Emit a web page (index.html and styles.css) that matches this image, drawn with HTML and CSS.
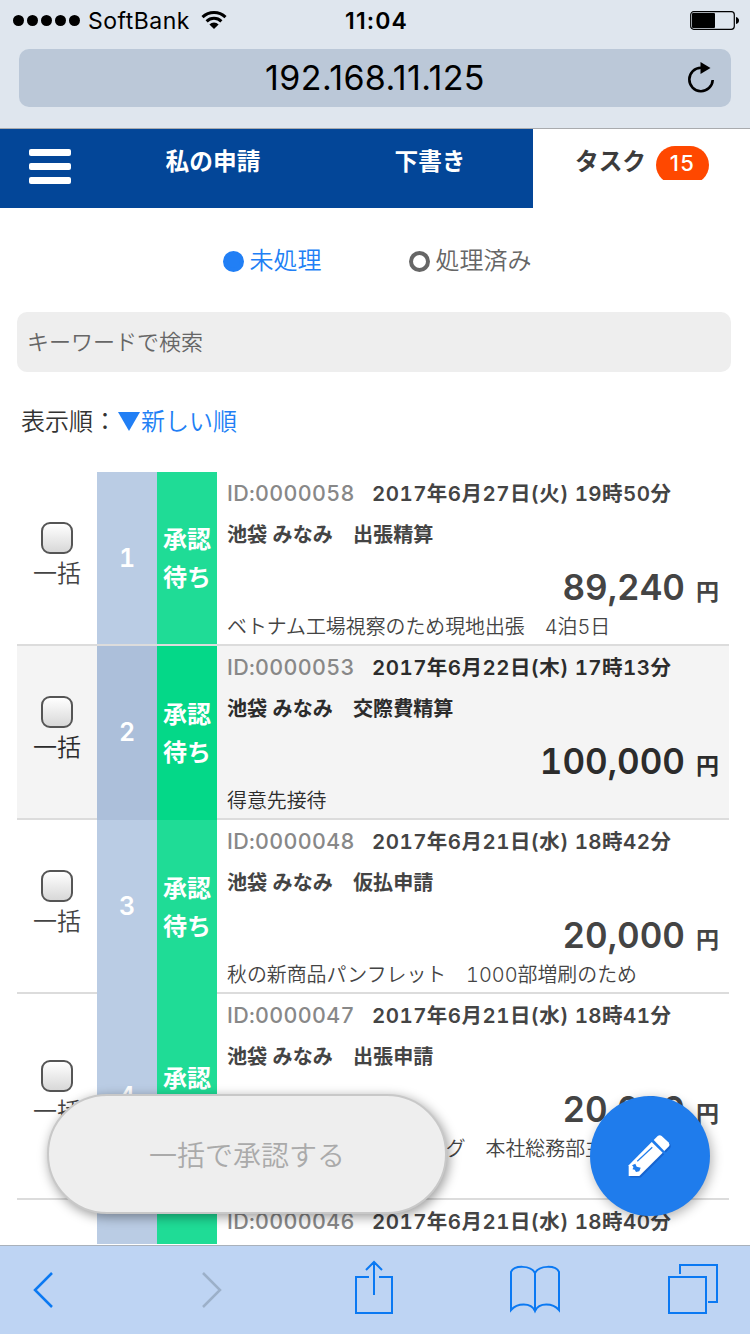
FILE: index.html
```html
<!DOCTYPE html>
<html lang="ja">

<head>
    <meta charset="UTF-8">
    <title>タスク</title>
    <link rel="stylesheet" href="styles.css">
</head>

<body>
    <div class="phone">
        <div class="status-bar">
            <div class="carrier">
                <span class="dots"><i></i><i></i><i></i><i></i><i></i></span>
                <span class="carrier-name">SoftBank</span>
                <svg class="wifi" width="26" height="20" viewBox="0 0 26 20">
                    <path d="M1.5 7.2a16.5 16.5 0 0 1 23 0M5.6 11.3a10.7 10.7 0 0 1 14.8 0" fill="none" stroke="#000" stroke-width="3" />
                    <path d="M13 19l-4.6-4.6a6.6 6.6 0 0 1 9.2 0z" />
                </svg>
            </div>
            <div class="clock">11:04</div>
            <svg class="battery" width="50" height="20" viewBox="0 0 50 20">
                <rect x=".7" y=".7" width="43.6" height="17.6" rx="3" fill="none" stroke="#000" stroke-width="1.2" />
                <rect x="2" y="2" width="23" height="15" rx="1" />
                <path d="M46 6q3 1 3 3.5t-3 3.5z" />
            </svg>
        </div>
        <div class="url-bar">
            <div class="url">192.168.11.125</div>
            <svg class="reload" width="30" height="34" viewBox="0 0 30 34">
                <path d="M15 6.8A11.7 11.7 0 1 0 26.7 19" fill="none" stroke="#000" stroke-width="2.6" />
                <path d="M14.5 1v12l10-6z" />
            </svg>
        </div>

        <div class="nav">
            <div class="menu"><span></span><span></span><span></span></div>
            <div class="tab">私の申請</div>
            <div class="tab">下書き</div>
            <div class="tab active">タスク<div class="badge-wrap"><span class="badge">15</span></div></div>
        </div>

        <div class="main">
            <div class="filter">
                <label class="on"><i class="radio"></i>未処理</label>
                <label><i class="radio"></i>処理済み</label>
            </div>
            <input type="text" class="search" placeholder="キーワードで検索">
            <div class="sort">表示順：<a><svg width="22" height="20" viewBox="0 0 22 20"><path d="M0 0h22L11 19z" fill="#217ff5" /></svg>新しい順</a></div>

            <div class="list">
                <div class="row">
                    <div class="check"><input type="checkbox">一括</div>
                    <div class="no">1</div>
                    <div class="state">承認<br>待ち</div>
                    <div class="detail">
                        <div class="head"><span class="id">ID:0000058</span><span class="date">2017年6月27日(火) 19時50分</span></div>
                        <div class="name">池袋 みなみ　出張精算</div>
                        <div class="money"><b>89,240</b>円</div>
                        <div class="memo">ベトナム工場視察のため現地出張　4泊5日</div>
                    </div>
                </div>
                <div class="row even">
                    <div class="check"><input type="checkbox">一括</div>
                    <div class="no">2</div>
                    <div class="state">承認<br>待ち</div>
                    <div class="detail">
                        <div class="head"><span class="id">ID:0000053</span><span class="date">2017年6月22日(木) 17時13分</span></div>
                        <div class="name">池袋 みなみ　交際費精算</div>
                        <div class="money"><b>100,000</b>円</div>
                        <div class="memo">得意先接待</div>
                    </div>
                </div>
                <div class="row">
                    <div class="check"><input type="checkbox">一括</div>
                    <div class="no">3</div>
                    <div class="state">承認<br>待ち</div>
                    <div class="detail">
                        <div class="head"><span class="id">ID:0000048</span><span class="date">2017年6月21日(水) 18時42分</span></div>
                        <div class="name">池袋 みなみ　仮払申請</div>
                        <div class="money"><b>20,000</b>円</div>
                        <div class="memo">秋の新商品パンフレット　1000部増刷のため</div>
                    </div>
                </div>
                <div class="row tall">
                    <div class="check"><input type="checkbox">一括</div>
                    <div class="no">4</div>
                    <div class="state">承認<br>待ち</div>
                    <div class="detail">
                        <div class="head"><span class="id">ID:0000047</span><span class="date">2017年6月21日(水) 18時41分</span></div>
                        <div class="name">池袋 みなみ　出張申請</div>
                        <div class="money"><b>20,000</b>円</div>
                        <div class="memo">新管理職向けトレーニング　本社総務部主催</div>
                    </div>
                </div>
                <div class="row">
                    <div class="check"></div>
                    <div class="no"></div>
                    <div class="state"></div>
                    <div class="detail">
                        <div class="head"><span class="id">ID:0000046</span><span class="date">2017年6月21日(水) 18時40分</span></div>
                    </div>
                </div>
            </div>
        </div>

        <div class="toolbar">
            <svg width="22" height="38" viewBox="0 0 22 38"><path d="M20 2L3 19l17 17" /></svg>
            <svg class="off" width="22" height="38" viewBox="0 0 22 38"><path d="M2 2l17 17L2 36" /></svg>
            <svg width="40" height="54" viewBox="0 0 40 54"><path d="M15 17H2v36h36V17H25M20 35V2M12 10l8-8 8 8" /></svg>
            <svg width="52" height="50" viewBox="0 0 52 50"><path d="M26 9v38M26 9C22 1 5 1 2 8v38c6-7 20-8 24 1C30 38 44 39 50 46V8C47 1 30 1 26 9" /></svg>
            <svg width="50" height="50" viewBox="0 0 50 50"><path d="M1 13h37v36H1zM12 10V1h37v37h-9" /></svg>
        </div>

        <!-- 浮動按鈕 -->
        <button class="approve">一括で承認する</button>
        <div class="edit">
            <svg width="44" height="44" viewBox="0 0 44 44">
                <g fill="#1764cf" transform="translate(1.5 1.5)">
                    <path d="M.7 31.3V42h10.600l23.400-23.300-11-10.700z" />
                    <path d="M25.700 6l4-4q2-1.600 4 0l7 6.500q1.500 2 0 4l-4.400 4.500z" />
                </g>
                <path d="M.7 31.3V42h10.600l23.400-23.300-11-10.700z" fill="#fff" />
                <path d="M25.700 6l4-4q2-1.600 4 0l7 6.500q1.500 2 0 4l-4.400 4.500z" fill="#fff" />
                <path d="M9.300 27.300l15-14" stroke="#1f7cec" stroke-width="1.200" fill="none" />
                <path d="M4 31.300l3.300-1.600 1.400 3 4 1-1.400 3.600-3.300.7-1.300-2.200-2.200-.5 1-2.300z" fill="#1f7cec" />
            </svg>
        </div>
    </div>
</body>

</html>
```
FILE: styles.css
```css
* {
    padding: 0;
    margin: 0;
    box-sizing: border-box;
}

body {
    font-family: Inter, "Noto Sans CJK JP", sans-serif;
    background: #fff;
    color: #444;
}

.phone {
    position: relative;
    display: flex;
    flex-direction: column;
    width: 750px;
    height: 1334px;
    overflow: hidden;
}

.status-bar {
    display: grid;
    grid-template-columns: 1fr auto 1fr;
    align-items: center;
    height: 40px;
    padding: 1px 10px 0 13px;
    background: #dfe6ee;
    color: #000;
}

.carrier {
    display: flex;
    align-items: center;
}

.dots {
    display: flex;
    gap: 3px;
    margin-right: 8px;
}

.dots i {
    width: 11px;
    height: 11px;
    border-radius: 50%;
    background: #000;
}

.carrier-name {
    font-size: 23px;
    letter-spacing: 0.5px;
}

.wifi {
    margin-left: 11px;
    margin-top: -2px;
}

.clock {
    font-size: 23px;
    font-weight: 600;
    letter-spacing: 1.1px;
}

.battery {
    justify-self: end;
}

.url-bar {
    position: relative;
    height: 89px;
    padding: 9px 19px 0;
    background: #dfe6ee;
    border-bottom: 1px solid #a9abae;
}

.url {
    height: 58px;
    line-height: 58px;
    border-radius: 10px;
    background: #bbc8d8;
    color: #000;
    font-size: 34px;
    text-align: center;
    letter-spacing: 0.4px;
}

.reload {
    position: absolute;
    left: 686px;
    top: 21px;
}

.nav {
    display: flex;
    height: 79px;
    background: #034698;
    color: #fff;
    font-size: 23.7px;
    font-weight: 700;
}

.menu {
    display: flex;
    flex-direction: column;
    gap: 7px;
    width: 99px;
    padding: 20px 0 0 29px;
}

.menu span {
    width: 42px;
    height: 7px;
    border-radius: 2px;
    background: #fff;
}

.tab {
    width: 217px;
    padding-left: 11px;
    line-height: 65px;
    text-align: center;
}

.tab.active {
    display: flex;
    justify-content: center;
    padding-left: 1px;
    background: #fff;
    color: #3c3c3c;
}

.badge-wrap {
    height: 34px;
    margin: 17px 0 0 10px;
    overflow: hidden;
}

.badge {
    display: block;
    width: 53px;
    height: 38px;
    border-radius: 19px;
    background: #ff4800;
    color: #fff;
    font-size: 22px;
    font-weight: 500;
    line-height: 34px;
    letter-spacing: 1.5px;
}

.main {
    flex: 1;
    min-height: 0;
    padding: 0 19px 0 17px;
    overflow: hidden;
}

.filter {
    display: flex;
    justify-content: center;
    gap: 87px;
    height: 104px;
    padding: 36px 0 34px 6px;
    font-size: 24px;
    font-weight: 350;
    line-height: 34px;
    color: #666;
}

.filter label {
    display: flex;
    align-items: center;
}

.filter .on {
    color: #217ff5;
}

.radio {
    width: 21px;
    height: 21px;
    margin-right: 6px;
    border: 4px solid #666;
    border-radius: 50%;
}

.on .radio {
    border-color: #217ff5;
    background: #217ff5;
}

.search {
    display: block;
    width: 714px;
    height: 60px;
    padding: 0 10px;
    border: 0;
    border-radius: 10px;
    background: #eee;
    font: 350 22px Inter, "Noto Sans CJK JP", sans-serif;
}

.search::placeholder {
    color: #666;
}

.sort {
    height: 100px;
    padding: 30px 0 0 4px;
    font-size: 24px;
    font-weight: 350;
    line-height: 40px;
    color: #333;
}

.sort a {
    margin-left: 1px;
    color: #217ff5;
}

.sort svg {
    vertical-align: -2px;
    margin-right: 1px;
}

.list {
    width: 712px;
    height: 772px;
    overflow: hidden;
}

.row {
    display: flex;
    height: 174px;
    border-bottom: 2px solid #dcdcdc;
    font-variant-numeric: tabular-nums;
}

.row.even {
    background: #f4f4f4;
    color: #2c2c2c;
}

.row.tall {
    height: 206px;
}

.check {
    display: flex;
    flex-direction: column;
    align-items: center;
    justify-content: center;
    width: 80px;
    padding-bottom: 2px;
    font-size: 24px;
    font-weight: 350;
    line-height: 36px;
}

.check input {
    appearance: none;
    width: 32px;
    height: 32px;
    margin-bottom: 2px;
    border: 2px solid #555;
    border-radius: 9px;
    background: linear-gradient(#fff, #d8d8d8);
}

.no,
.state {
    display: flex;
    align-items: center;
    justify-content: center;
    width: 60px;
    color: #fff;
    font-size: 24px;
    font-weight: 700;
}

.no {
    background: #bacce4;
    font-size: 25px;
    font-weight: 600;
}

.state {
    padding-top: 2px;
    background: #1fdc96;
    line-height: 38px;
}

.row:not(:first-child) .no,
.row:not(:first-child) .state {
    margin-bottom: -2px;
}

.row:not(:first-child) .no {
    padding-bottom: 2px;
}

.even .no {
    background: #acbfda;
}

.even .state {
    background: #04d888;
}

.detail {
    flex: 1;
    padding: 1px 10px 0;
    white-space: nowrap;
}

.head {
    height: 40px;
    line-height: 40px;
    font-size: 20.5px;
    font-weight: 600;
}

.id {
    display: inline-block;
    width: 145px;
    color: #888;
    font-size: 21.5px;
    font-weight: 500;
    letter-spacing: 0.3px;
}

.date {
    letter-spacing: 0.45px;
}

.name {
    height: 44px;
    line-height: 44px;
    font-size: 20.1px;
    font-weight: 700;
}

.money {
    height: 54px;
    line-height: 61px;
    font-size: 23px;
    font-weight: 700;
    text-align: right;
}

.money b {
    margin-right: 11px;
    font-size: 35px;
    font-weight: 600;
}

.memo {
    font-size: 19.9px;
    font-weight: 350;
    line-height: 32px;
}

.toolbar {
    display: flex;
    align-items: center;
    height: 89px;
    padding-left: 32px;
    border-top: 1px solid #a9b1bb;
    background: #bed4f3;
}

.toolbar svg {
    fill: none;
    stroke: #0b79f2;
    stroke-width: 2;
}

.toolbar svg:nth-child(-n+2) {
    stroke-width: 2.5;
}

.toolbar .off {
    margin-left: 147px;
    stroke: #9cb0c9;
}

.toolbar svg:nth-child(3) {
    margin: -6px 0 0 131px;
}

.toolbar svg:nth-child(4) {
    margin: -2px 0 0 115px;
}

.toolbar svg:nth-child(5) {
    margin: -2px 0 0 107px;
}

.approve {
    position: absolute;
    left: 47px;
    top: 1094px;
    width: 400px;
    height: 120px;
    border: 2px solid #c8c8c8;
    border-radius: 60px;
    background: #eee;
    box-shadow: 2px 3px 12px rgba(0, 0, 0, 0.4);
    color: #aaa;
    font: 350 28px Inter, "Noto Sans CJK JP", sans-serif;
}

.edit {
    position: absolute;
    left: 590px;
    top: 1096px;
    display: flex;
    align-items: center;
    justify-content: center;
    width: 120px;
    height: 120px;
    border-radius: 50%;
    background: #1f7cec;
    box-shadow: 2px 3px 12px rgba(0, 0, 0, 0.3);
}
```
